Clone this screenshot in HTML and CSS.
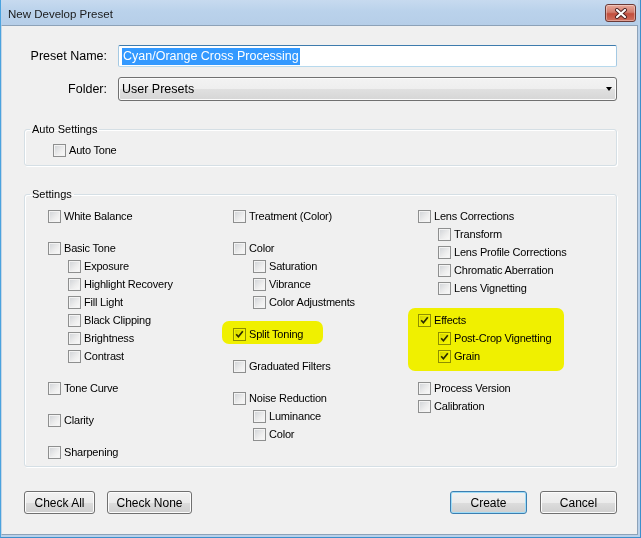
FILE: index.html
```html
<!DOCTYPE html>
<html lang="en">
<head>
  <meta charset="UTF-8" />
  <meta name="viewport" content="width=device-width, initial-scale=1.0"/>
  <title>New Develop Preset</title>
  <link rel="stylesheet" href="styles.css">
</head>
<body>

  <div class="window">

    <!-- Title bar -->
    <div class="titlebar">
      <span class="title">New Develop Preset</span>
      <span class="close-btn">
        <svg width="14" height="11" viewBox="0 0 14 11">
          <path d="M3 2 L11 9 M11 2 L3 9" stroke="#4b2020" stroke-width="4" stroke-linecap="round" fill="none"/>
          <path d="M3 2 L11 9 M11 2 L3 9" stroke="#ffffff" stroke-width="2.2" stroke-linecap="round" fill="none"/>
        </svg>
      </span>
    </div>

    <div class="client">

      <!-- Name / folder -->
      <div class="form">
        <label class="form-label">Preset Name:</label>
        <div class="textbox"><span class="selected">Cyan/Orange Cross Processing</span></div>
        <label class="form-label">Folder:</label>
        <div class="combo">
          <span>User Presets</span>
          <span class="combo-arrow"></span>
        </div>
      </div>

      <!-- Auto settings -->
      <fieldset class="group">
        <legend>Auto Settings</legend>
        <div class="auto-body">
          <div class="check"><span class="box"></span><span>Auto Tone</span></div>
        </div>
      </fieldset>

      <!-- Settings -->
      <fieldset class="group">
        <legend>Settings</legend>
        <div class="settings-grid">

          <div class="col">
            <div class="item">
              <div class="check"><span class="box"></span><span>White Balance</span></div>
            </div>
            <div class="item">
              <div class="check"><span class="box"></span><span>Basic Tone</span></div>
              <div class="check sub"><span class="box"></span><span>Exposure</span></div>
              <div class="check sub"><span class="box"></span><span>Highlight Recovery</span></div>
              <div class="check sub"><span class="box"></span><span>Fill Light</span></div>
              <div class="check sub"><span class="box"></span><span>Black Clipping</span></div>
              <div class="check sub"><span class="box"></span><span>Brightness</span></div>
              <div class="check sub"><span class="box"></span><span>Contrast</span></div>
            </div>
            <div class="item">
              <div class="check"><span class="box"></span><span>Tone Curve</span></div>
            </div>
            <div class="item">
              <div class="check"><span class="box"></span><span>Clarity</span></div>
            </div>
            <div class="item">
              <div class="check"><span class="box"></span><span>Sharpening</span></div>
            </div>
          </div>

          <div class="col">
            <div class="item">
              <div class="check"><span class="box"></span><span>Treatment (Color)</span></div>
            </div>
            <div class="item">
              <div class="check"><span class="box"></span><span>Color</span></div>
              <div class="check sub"><span class="box"></span><span>Saturation</span></div>
              <div class="check sub"><span class="box"></span><span>Vibrance</span></div>
              <div class="check sub"><span class="box"></span><span>Color Adjustments</span></div>
            </div>
            <div class="item marked hl-split">
              <div class="check">
                <span class="box checked"><svg width="9" height="9" viewBox="0 0 9 9"><path d="M1.2 4.3 L3.4 6.8 L7.8 1.3" stroke="#2b2b2b" stroke-width="1.7" fill="none"/></svg></span>
                <span>Split Toning</span>
              </div>
            </div>
            <div class="item">
              <div class="check"><span class="box"></span><span>Graduated Filters</span></div>
            </div>
            <div class="item">
              <div class="check"><span class="box"></span><span>Noise Reduction</span></div>
              <div class="check sub"><span class="box"></span><span>Luminance</span></div>
              <div class="check sub"><span class="box"></span><span>Color</span></div>
            </div>
          </div>

          <div class="col">
            <div class="item">
              <div class="check"><span class="box"></span><span>Lens Corrections</span></div>
              <div class="check sub"><span class="box"></span><span>Transform</span></div>
              <div class="check sub"><span class="box"></span><span>Lens Profile Corrections</span></div>
              <div class="check sub"><span class="box"></span><span>Chromatic Aberration</span></div>
              <div class="check sub"><span class="box"></span><span>Lens Vignetting</span></div>
            </div>
            <div class="item marked hl-effects">
              <div class="check">
                <span class="box checked"><svg width="9" height="9" viewBox="0 0 9 9"><path d="M1.2 4.3 L3.4 6.8 L7.8 1.3" stroke="#2b2b2b" stroke-width="1.7" fill="none"/></svg></span>
                <span>Effects</span>
              </div>
              <div class="check sub">
                <span class="box checked"><svg width="9" height="9" viewBox="0 0 9 9"><path d="M1.2 4.3 L3.4 6.8 L7.8 1.3" stroke="#2b2b2b" stroke-width="1.7" fill="none"/></svg></span>
                <span>Post-Crop Vignetting</span>
              </div>
              <div class="check sub">
                <span class="box checked"><svg width="9" height="9" viewBox="0 0 9 9"><path d="M1.2 4.3 L3.4 6.8 L7.8 1.3" stroke="#2b2b2b" stroke-width="1.7" fill="none"/></svg></span>
                <span>Grain</span>
              </div>
            </div>
            <div class="item">
              <div class="check"><span class="box"></span><span>Process Version</span></div>
              <div class="check"><span class="box"></span><span>Calibration</span></div>
            </div>
          </div>

        </div>
      </fieldset>

      <!-- Buttons -->
      <div class="button-row">
        <button class="btn btn-check-all">Check All</button>
        <button class="btn btn-check-none">Check None</button>
        <button class="btn btn-default btn-create">Create</button>
        <button class="btn btn-cancel">Cancel</button>
      </div>

    </div>
  </div>

</body>
</html>
```

FILE: styles.css
```css
html, body {
  margin: 0;
  padding: 0;
}

body {
  width: 641px;
  height: 538px;
  overflow: hidden;
  font-family: 'Liberation Sans', Arial, sans-serif;
  font-size: 11px;
  color: #000;
}

.window {
  box-sizing: border-box;
  height: 538px;
  display: flex;
  flex-direction: column;
  background: #b9d1ea;
  border-left: 1px solid #4aa3df;
  border-right: 1px solid #3d8fcc;
  border-bottom: 1px solid #3d8fcc;
  padding: 0 2px 2px 0;
}

.titlebar {
  height: 25px;
  display: flex;
  align-items: flex-start;
  justify-content: space-between;
  padding: 0 2px 0 7px;
  background: linear-gradient(#c7daef, #bad2eb 45%, #b6cee8);
}

.title {
  font-size: 11.5px;
  color: #1a1a1a;
  margin-top: 8px;
}

.close-btn {
  width: 29px;
  height: 16px;
  margin-top: 4px;
  border: 1px solid #6b3a36;
  border-radius: 3px;
  background: linear-gradient(#e8a899, #d27d6e 45%, #c24e3d 55%, #d0705f);
  box-shadow: inset 0 0 0 1px rgba(255, 255, 255, 0.35);
  display: flex;
  align-items: center;
  justify-content: center;
}

.client {
  flex: 1;
  background: #f0f0f0;
  border: 1px solid #8da2b8;
  border-left-color: #c5d6e6;
  display: flex;
  flex-direction: column;
}

/* name + folder rows */
.form {
  display: grid;
  grid-template-columns: 105px 499px;
  grid-template-rows: 22px 24px;
  column-gap: 11px;
  row-gap: 10px;
  align-items: center;
  margin-top: 19px;
}

.form-label {
  text-align: right;
  font-size: 12.5px;
}

.textbox {
  box-sizing: border-box;
  height: 22px;
  padding: 0 3px;
  display: flex;
  align-items: center;
  background: #fff;
  border: 1px solid;
  border-color: #3d7bad #a4c9e3 #b7d9ed #a4c9e3;
  border-radius: 2px;
}

.selected {
  background: #3399ff;
  color: #fff;
  font-size: 12.5px;
  line-height: 17px;
  padding: 0 1px;
}

.combo {
  box-sizing: border-box;
  height: 24px;
  padding: 0 4px 0 3px;
  display: flex;
  align-items: center;
  justify-content: space-between;
  font-size: 12.5px;
  border: 1px solid #707070;
  border-radius: 3px;
  background: linear-gradient(#f3f3f3, #eeeeee 50%, #e0e0e0 50%, #d6d6d6);
  box-shadow: inset 0 0 0 1px #fbfbfb;
}

.combo-arrow {
  width: 0;
  height: 0;
  border-left: 3.5px solid transparent;
  border-right: 3.5px solid transparent;
  border-top: 4px solid #000;
}

/* group boxes */
.group {
  margin: 22px 20px 0 22px;
  padding: 0;
  border: 1px solid #d5dfe5;
  border-radius: 3px;
  box-shadow: inset 1px 1px 0 #fff, 1px 1px 0 #fff;
}

.group legend {
  margin-left: 5px;
  padding: 0 2px;
  font-size: 11px;
  line-height: 13px;
}

.auto-body {
  padding: 5px 0 6px 28px;
}

.settings-grid {
  display: grid;
  grid-template-columns: repeat(3, 185px);
  padding: 6px 0 5px 23px;
}

.col {
  display: flex;
  flex-direction: column;
  gap: 14px;
}

.check {
  height: 18px;
  display: flex;
  align-items: center;
  letter-spacing: -0.2px;
  white-space: nowrap;
}

.check.sub {
  padding-left: 20px;
}

.box {
  box-sizing: border-box;
  width: 13px;
  height: 13px;
  margin-right: 3px;
  flex-shrink: 0;
  border: 1px solid #8e8f8f;
  background: linear-gradient(135deg, #cfd2d6, #eeeeee 60%, #fafafa);
  box-shadow: inset 0 0 0 1px #f3f3f3;
  display: flex;
  align-items: center;
  justify-content: center;
}

/* yellow marker drawn over the options */
.marked {
  position: relative;
}

.marked::after {
  content: "";
  position: absolute;
  background: #ffff00;
  mix-blend-mode: multiply;
  border-radius: 7px;
  pointer-events: none;
}

.hl-split::after {
  top: -4px;
  bottom: -1px;
  left: -11px;
  right: 95px;
}

.hl-effects::after {
  top: -3px;
  bottom: -6px;
  left: -10px;
  right: 39px;
}

/* bottom buttons */
.button-row {
  display: flex;
  margin-top: 24px;
  padding: 0 20px 0 22px;
}

.btn {
  box-sizing: border-box;
  height: 23px;
  padding: 0;
  font-family: 'Liberation Sans', Arial, sans-serif;
  font-size: 12px;
  color: #000;
  border: 1px solid #707070;
  border-radius: 3px;
  background: linear-gradient(#f2f2f2, #ebebeb 50%, #dddddd 50%, #cfcfcf);
  box-shadow: inset 0 0 0 1px #fcfcfc;
}

.btn-check-all { width: 71px; }
.btn-check-none { width: 85px; margin-left: 12px; }
.btn-create { width: 77px; margin-left: auto; }
.btn-cancel { width: 77px; margin-left: 13px; }

.btn-default {
  border-color: #3c7fb1;
  box-shadow: inset 0 0 0 1px #9fdcf7;
}
```
